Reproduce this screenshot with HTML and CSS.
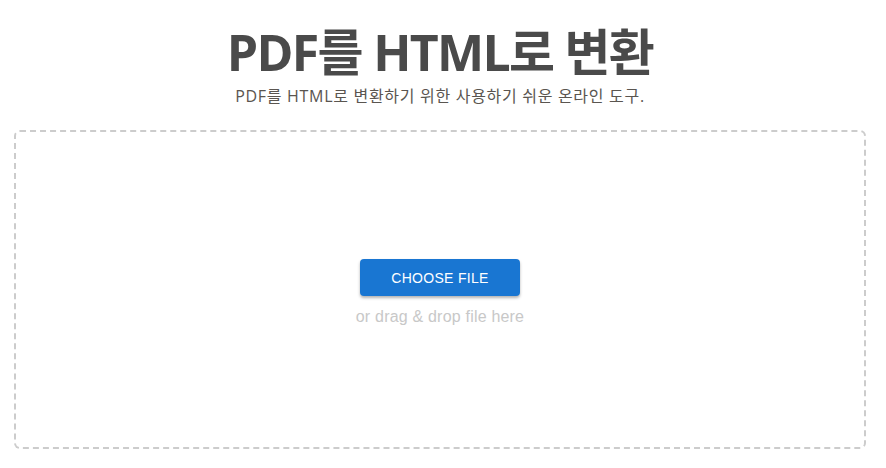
FILE: index.html
```html
<!DOCTYPE html>
<html lang="ko">
<head>
    <meta charset="UTF-8">
    <meta name="viewport" content="width=device-width, initial-scale=1.0">
    <title>PDF를 HTML로 변환</title>
    <link rel="stylesheet" href="styles.css">
</head>
<body>
    <div class="page">
        <header class="page-header">
            <h1>PDF를 HTML로 변환</h1>
            <p class="subtitle">PDF를 HTML로 변환하기 위한 사용하기 쉬운 온라인 도구.</p>
        </header>

        <div class="dropzone">
            <button class="choose-button" type="button">Choose file</button>
            <p class="drop-hint">or drag &amp; drop file here</p>
        </div>
    </div>
</body>
</html>
```

FILE: styles.css
```css
body {
    font-family: "Open Sans", "Noto Sans CJK KR", sans-serif;
    background-color: #ffffff;
    margin: 0;
    padding: 0;
}
.page {
    padding: 20px 20px 19px 14px;
}
.page-header {
    text-align: center;
}
.page-header h1 {
    margin: 0;
    font-size: 50px;
    font-weight: 700;
    line-height: 64px;
    color: #4a4a4a;
    letter-spacing: -1.7px;
}
.subtitle {
    margin: 0;
    font-size: 16px;
    line-height: 24px;
    color: #5a5550;
    letter-spacing: 0.7px;
}
.dropzone {
    margin-top: 22px;
    height: 309px;
    padding-top: 6px;
    border: 2px dashed #cccccc;
    border-radius: 6px;
    display: flex;
    flex-direction: column;
    align-items: center;
    justify-content: center;
}
.choose-button {
    width: 160px;
    height: 37px;
    border: none;
    border-radius: 4px;
    background-color: #1976d2;
    color: #ffffff;
    font-family: "Liberation Sans", Arial, sans-serif;
    font-size: 14px;
    text-transform: uppercase;
    letter-spacing: 0.3px;
    box-shadow: 0 2px 3px rgba(0, 0, 0, 0.3);
    cursor: pointer;
}
.drop-hint {
    margin: 12px 0 0;
    font-family: "Liberation Sans", Arial, sans-serif;
    font-size: 16px;
    letter-spacing: 0.2px;
    color: #c8c8c8;
}
```
